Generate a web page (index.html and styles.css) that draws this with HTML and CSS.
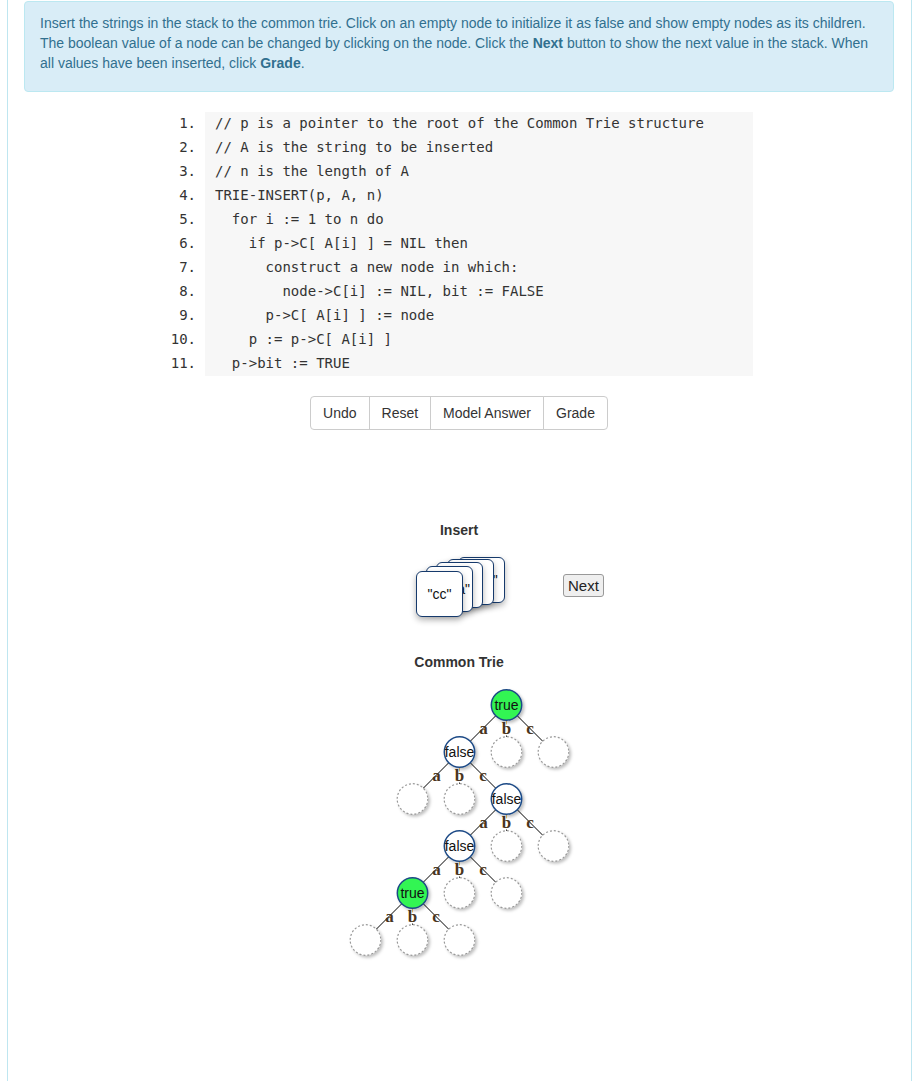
FILE: index.html
```html
<!DOCTYPE html>
<html>
<head>
<meta charset="utf-8">
<title>Common Trie</title>
<link rel="stylesheet" href="styles.css">
</head>
<body>
<div class="page">
  <div class="alert">Insert the strings in the stack to the common trie. Click on an empty node to initialize it as false and show empty nodes as its children. The boolean value of a node can be changed by clicking on the node. Click the <b>Next</b> button to show the next value in the stack. When all values have been inserted, click <b>Grade</b>.</div>

  <div class="code">
    <div class="line"><span class="num">1.</span><span class="src">// p is a pointer to the root of the Common Trie structure</span></div>
    <div class="line"><span class="num">2.</span><span class="src">// A is the string to be inserted</span></div>
    <div class="line"><span class="num">3.</span><span class="src">// n is the length of A</span></div>
    <div class="line"><span class="num">4.</span><span class="src">TRIE-INSERT(p, A, n)</span></div>
    <div class="line"><span class="num">5.</span><span class="src">  for i := 1 to n do</span></div>
    <div class="line"><span class="num">6.</span><span class="src">    if p-&gt;C[ A[i] ] = NIL then</span></div>
    <div class="line"><span class="num">7.</span><span class="src">      construct a new node in which:</span></div>
    <div class="line"><span class="num">8.</span><span class="src">        node-&gt;C[i] := NIL, bit := FALSE</span></div>
    <div class="line"><span class="num">9.</span><span class="src">      p-&gt;C[ A[i] ] := node</span></div>
    <div class="line"><span class="num">10.</span><span class="src">    p := p-&gt;C[ A[i] ]</span></div>
    <div class="line"><span class="num">11.</span><span class="src">  p-&gt;bit := TRUE</span></div>
  </div>

  <div class="btn-group">
    <button class="btn">Undo</button><button class="btn">Reset</button><button class="btn">Model Answer</button><button class="btn">Grade</button>
  </div>

  <div class="section-title insert-title">Insert</div>
  <div class="stack-row">
    <div></div>
    <div class="deck">
      <div class="card c5">"abc"</div>
      <div class="card c4">"c"</div>
      <div class="card c3">"b"</div>
      <div class="card c2">"aaaa"</div>
      <div class="card c1">"cc"</div>
    </div>
    <div class="next-cell"><button class="next">Next</button></div>
  </div>

  <div class="section-title trie-title">Common Trie</div>
  <div class="trie">
    <svg width="236" height="285" viewBox="0 0 236 285" xmlns="http://www.w3.org/2000/svg">
      <defs>
        <filter id="sh" x="-50%" y="-50%" width="200%" height="200%">
          <feDropShadow dx="2" dy="2" stdDeviation="1.8" flood-color="#000" flood-opacity="0.25"/>
        </filter>
      </defs>
      <g class="edges">
        <line x1="165.5" y1="22" x2="118.5" y2="69"/><line x1="165.5" y1="22" x2="165.5" y2="69"/><line x1="165.5" y1="22" x2="212.5" y2="69"/>
        <line x1="118.5" y1="69" x2="71.5" y2="116"/><line x1="118.5" y1="69" x2="118.5" y2="116"/><line x1="118.5" y1="69" x2="165.5" y2="116"/>
        <line x1="165.5" y1="116" x2="118.5" y2="163"/><line x1="165.5" y1="116" x2="165.5" y2="163"/><line x1="165.5" y1="116" x2="212.5" y2="163"/>
        <line x1="118.5" y1="163" x2="71.5" y2="210"/><line x1="118.5" y1="163" x2="118.5" y2="210"/><line x1="118.5" y1="163" x2="165.5" y2="210"/>
        <line x1="71.5" y1="210" x2="24.5" y2="257"/><line x1="71.5" y1="210" x2="71.5" y2="257"/><line x1="71.5" y1="210" x2="118.5" y2="257"/>
      </g>
      <g class="labels">
        <text x="142.5" y="51">a</text><text class="mid" x="165.5" y="51">b</text><text x="189" y="51">c</text>
        <text x="95.5" y="98">a</text><text class="mid" x="118.5" y="98">b</text><text x="142" y="98">c</text>
        <text x="142.5" y="145">a</text><text class="mid" x="165.5" y="145">b</text><text x="189" y="145">c</text>
        <text x="95.5" y="192">a</text><text class="mid" x="118.5" y="192">b</text><text x="142" y="192">c</text>
        <text x="48.5" y="239">a</text><text class="mid" x="71.5" y="239">b</text><text x="95" y="239">c</text>
      </g>
      <g class="empty" filter="url(#sh)">
        <circle cx="165.5" cy="69" r="15.3"/><circle cx="212.5" cy="69" r="15.3"/>
        <circle cx="71.5" cy="116" r="15.3"/><circle cx="118.5" cy="116" r="15.3"/>
        <circle cx="165.5" cy="163" r="15.3"/><circle cx="212.5" cy="163" r="15.3"/>
        <circle cx="118.5" cy="210" r="15.3"/><circle cx="165.5" cy="210" r="15.3"/>
        <circle cx="24.5" cy="257" r="15.3"/><circle cx="71.5" cy="257" r="15.3"/><circle cx="118.5" cy="257" r="15.3"/>
      </g>
      <g class="node" filter="url(#sh)">
        <circle class="t" cx="165.5" cy="22" r="15.2"/>
        <circle class="f" cx="118.5" cy="69" r="15.2"/>
        <circle class="f" cx="165.5" cy="116" r="15.2"/>
        <circle class="f" cx="118.5" cy="163" r="15.2"/>
        <circle class="t" cx="71.5" cy="210" r="15.2"/>
      </g>
      <g class="node-text">
        <text x="165.5" y="27">true</text>
        <text x="118.5" y="74">false</text>
        <text x="165.5" y="121">false</text>
        <text x="118.5" y="168">false</text>
        <text x="71.5" y="215">true</text>
      </g>
    </svg>
  </div>
</div>
</body>
</html>
```

FILE: styles.css
```css
html, body {
  margin: 0;
  padding: 0;
  background: #fff;
}

body {
  font-family: "Liberation Sans", Arial, sans-serif;
  font-size: 14px;
  line-height: 20px;
  color: #333;
}

.page {
  margin: 0 5px 0 7px;
  padding: 1px 17px 0 16px;
  border-left: 1px solid #bfe6f0;
  border-right: 1px solid #bfe6f0;
  min-height: 1200px;
}

.alert {
  background: #d9edf7;
  border: 1px solid #bce8f1;
  border-radius: 4px;
  color: #31708f;
  padding: 11px 15px 18px;
}

.alert b {
  font-weight: bold;
}

.code {
  width: 588px;
  margin: 20px auto 0;
  font-family: "DejaVu Sans Mono", monospace;
  font-size: 14px;
  color: #333;
}

.line {
  display: flex;
  height: 24px;
  line-height: 22px;
}

.num {
  width: 31px;
  padding-right: 9px;
  text-align: right;
  flex: none;
}

.src {
  flex: 1;
  background: #f7f7f7;
  padding-left: 10px;
  white-space: pre;
}

.btn-group {
  display: flex;
  justify-content: center;
  margin-top: 20px;
}

.btn {
  font-family: "Liberation Sans", Arial, sans-serif;
  font-size: 14px;
  line-height: 20px;
  color: #333;
  background: #fff;
  border: 1px solid #ccc;
  padding: 6px 12px;
  margin: 0 0 0 -1px;
  border-radius: 0;
}

.btn:first-child {
  border-radius: 4px 0 0 4px;
  margin-left: 0;
}

.btn:last-child {
  border-radius: 0 4px 4px 0;
}

.section-title {
  text-align: center;
  font-weight: bold;
  color: #333;
}

.insert-title {
  margin-top: 90px;
}

.stack-row {
  display: grid;
  grid-template-columns: 1fr auto 1fr;
  margin-top: 17px;
}

.deck {
  position: relative;
  width: 88px;
  height: 60px;
  margin-left: 2px;
}

.card {
  position: absolute;
  box-sizing: border-box;
  width: 47px;
  height: 46px;
  border: 1.5px solid #163a6c;
  border-radius: 6px;
  background: #fff;
  box-shadow: 0 3px 6px rgba(0, 0, 0, 0.3);
  display: flex;
  align-items: center;
  justify-content: center;
  font-size: 14px;
  color: #111;
}

.c1 { left: 0; top: 14px; }
.c2 { left: 10px; top: 9px; }
.c3 { left: 20px; top: 5px; }
.c4 { left: 31px; top: 2px; }
.c5 { left: 42px; top: 0; }

.next-cell {
  padding-left: 59px;
  padding-top: 17px;
}

.next {
  font-family: "Liberation Sans", Arial, sans-serif;
  font-size: 15px;
  line-height: 17px;
  color: #222;
  background: #efefef;
  border: 1px solid #999;
  border-radius: 3px;
  padding: 2px 4px;
}

.trie-title {
  margin-top: 35px;
}

.trie {
  display: flex;
  justify-content: center;
  margin-top: 11px;
}

.trie svg {
  display: block;
}

.edges line {
  stroke: #000;
  stroke-width: 1;
}

.labels text {
  font-family: "Liberation Serif", "Times New Roman", serif;
  font-weight: bold;
  font-size: 17px;
  fill: #4a3520;
  text-anchor: middle;
}

.labels .mid {
  stroke: #fff;
  stroke-width: 3;
  paint-order: stroke fill;
}

.empty circle {
  fill: #fff;
  stroke: #999;
  stroke-width: 1.2;
  stroke-dasharray: 2 2;
}

.node circle {
  stroke: #1d4a86;
  stroke-width: 1.5;
}

.node .t {
  fill: #33f552;
}

.node .f {
  fill: #fff;
}

.node-text text {
  font-family: "Liberation Sans", Arial, sans-serif;
  font-size: 14px;
  fill: #111;
  text-anchor: middle;
}
```
